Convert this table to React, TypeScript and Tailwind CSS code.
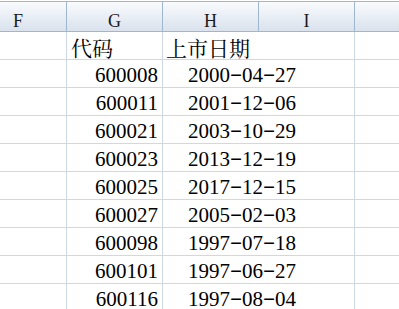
import React from "react";

const rows: [string, string][] = [
  ["600008", "2000-04-27"],
  ["600011", "2001-12-06"],
  ["600021", "2003-10-29"],
  ["600023", "2013-12-19"],
  ["600025", "2017-12-15"],
  ["600027", "2005-02-03"],
  ["600098", "1997-07-18"],
  ["600101", "1997-06-27"],
  ["600116", "1997-08-04"],
];

const serif = { fontFamily: '"Liberation Serif", "Times New Roman", serif' };
const cjk = {
  fontFamily: '"Noto Serif CJK SC", "Noto Sans CJK SC", "Liberation Serif", serif',
};

function DateText({ value }: { value: string }) {
  const parts = value.split("-");
  return (
    <span className="whitespace-nowrap">
      {parts.map((p, i) => (
        <React.Fragment key={i}>
          {i > 0 && (
            <span className="inline-block w-[12px] text-center scale-x-[1.8] -translate-y-[2px]">
              -
            </span>
          )}
          {p}
        </React.Fragment>
      ))}
    </span>
  );
}

function HeaderCell({ label, w }: { label: string; w: string }) {
  return (
    <div
      className={`${w} shrink-0 h-full border-r border-[#9eb6ce] flex items-end justify-center pb-[1px] text-[18px] leading-[18px] text-[#1a1a1a]`}
      style={serif}
    >
      {label}
    </div>
  );
}

export default function App() {
  return (
    <div className="w-[399px] h-[309px] overflow-hidden bg-white">
      {/* Column header */}
      <div className="mt-[1px] h-[31px] border-t border-b border-[#9eb6ce] bg-gradient-to-b from-[#f9fbfd] to-[#d9e2ed] flex w-[560px]">
        <div
          className="w-[67px] shrink-0 h-full border-r border-[#9eb6ce] flex items-end justify-start pl-[13px] pb-[1px] text-[18px] leading-[18px] text-[#1a1a1a]"
          style={serif}
        >
          F
        </div>
        <HeaderCell label="G" w="w-[96px]" />
        <HeaderCell label="H" w="w-[96px]" />
        <HeaderCell label="I" w="w-[96px]" />
        <HeaderCell label="J" w="w-[96px]" />
      </div>

      {/* Row with titles */}
      <div className="h-[28px] border-b border-[#d0d7e5] flex w-[560px]">
        <div className="w-[67px] shrink-0 border-r border-[#d0d7e5]" />
        <div
          className="w-[96px] shrink-0 border-r border-[#d0d7e5] flex items-end pl-[4px] pb-[1px] text-[21px] leading-[21px] text-black"
          style={cjk}
        >
          代码
        </div>
        <div
          className="w-[192px] shrink-0 border-r border-[#d0d7e5] flex items-end pl-[3px] pb-[1px] text-[21px] leading-[21px] text-black"
          style={cjk}
        >
          上市日期
        </div>
        <div className="flex-1" />
      </div>

      {rows.map(([code, date]) => (
        <div key={code} className="h-[28px] border-b border-[#d0d7e5] flex w-[560px]">
          <div className="w-[67px] shrink-0 border-r border-[#d0d7e5]" />
          <div
            className="w-[96px] shrink-0 border-r border-[#d0d7e5] flex items-end justify-end pr-[4px] pb-[1px] text-[21px] leading-[21px] text-black"
            style={serif}
          >
            {code}
          </div>
          <div
            className="w-[192px] shrink-0 border-r border-[#d0d7e5] flex items-end pl-[25px] pb-[1px] text-[21px] leading-[21px] text-black"
            style={serif}
          >
            <DateText value={date} />
          </div>
          <div className="flex-1" />
        </div>
      ))}
    </div>
  );
}
